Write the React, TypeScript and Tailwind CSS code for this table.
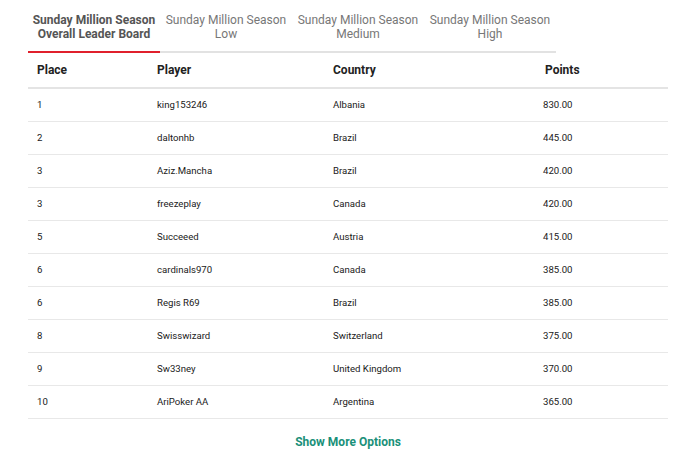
import React from "react";

const rows = [
  ["1", "king153246", "Albania", "830.00"],
  ["2", "daltonhb", "Brazil", "445.00"],
  ["3", "Aziz.Mancha", "Brazil", "420.00"],
  ["3", "freezeplay", "Canada", "420.00"],
  ["5", "Succeeed", "Austria", "415.00"],
  ["6", "cardinals970", "Canada", "385.00"],
  ["6", "Regis R69", "Brazil", "385.00"],
  ["8", "Swisswizard", "Switzerland", "375.00"],
  ["9", "Sw33ney", "United Kingdom", "370.00"],
  ["10", "AriPoker AA", "Argentina", "365.00"],
];

const tabs = [
  ["Sunday Million Season", "Overall Leader Board"],
  ["Sunday Million Season", "Low"],
  ["Sunday Million Season", "Medium"],
  ["Sunday Million Season", "High"],
];

export default function App() {
  return (
    <div className="w-[700px] h-[465px] bg-white px-[28px] pr-[32px]" style={{ fontFamily: "Roboto, 'Liberation Sans', sans-serif" }}>
      <div className="flex w-[528px] border-b-2 border-[#e2e2e2]">
        {tabs.map((t, i) => (
          <div
            key={i}
            className={
              "w-[132px] pt-[13px] pb-[10px] text-center text-[12px] leading-[14px] whitespace-nowrap -mb-[2px] border-b-2 " +
              (i === 0 ? "font-bold text-[#555555] border-[#e0202c]" : "text-[#777777] border-transparent")
            }
          >
            <div>{t[0]}</div>
            <div>{t[1]}</div>
          </div>
        ))}
      </div>
      <div className="w-[640px]">
        <div className="grid grid-cols-[120px_176px_212px_132px] h-[36px] items-center border-b-2 border-[#e4e4e4] text-[12px] font-bold text-[#222222]">
          <div className="pl-[9px]">Place</div>
          <div className="pl-[9px]">Player</div>
          <div className="pl-[9px]">Country</div>
          <div className="pl-[9px]">Points</div>
        </div>
        {rows.map((r, i) => (
          <div
            key={i}
            className="grid grid-cols-[120px_176px_212px_132px] h-[33px] items-center border-b border-[#e8e8e8] text-[9.6px] text-[#1a1a1a]"
          >
            <div className="pl-[9px]">{r[0]}</div>
            <div className="pl-[9px]">{r[1]}</div>
            <div className="pl-[9px]">{r[2]}</div>
            <div className="pl-[7px]">{r[3]}</div>
          </div>
        ))}
        <div className="text-center pt-[14px] text-[12px] font-bold text-[#1a9079]">Show More Options</div>
      </div>
    </div>
  );
}
